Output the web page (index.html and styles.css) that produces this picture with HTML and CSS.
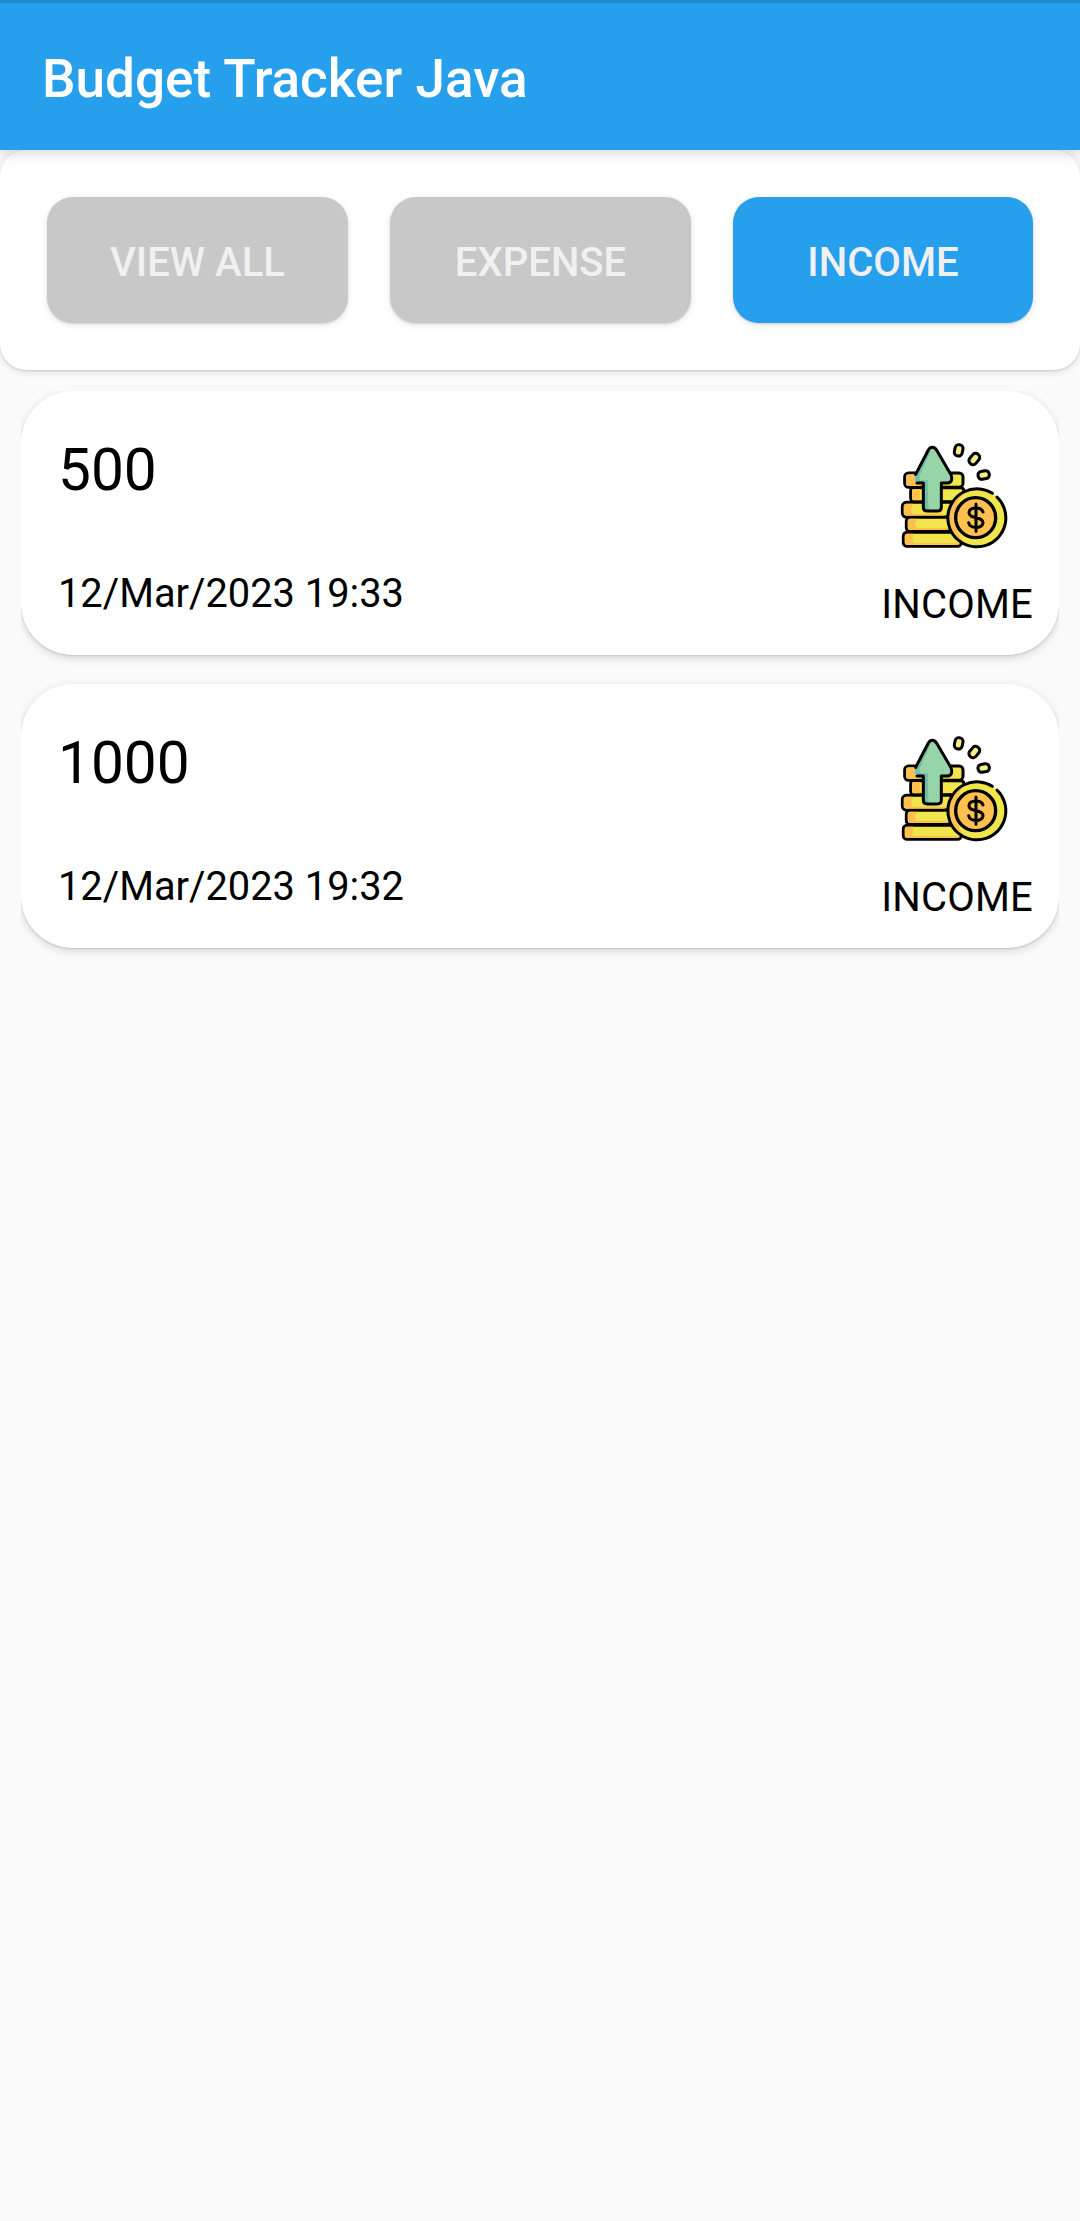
FILE: index.html
```html
<!DOCTYPE html>
<html lang="en">
<head>
<meta charset="utf-8">
<title>Budget Tracker Java</title>
<link rel="stylesheet" href="styles.css">
</head>
<body>
<svg class="sprite" width="0" height="0" aria-hidden="true">
  <symbol id="income-icon" viewBox="7 0 390 390">
    <g stroke="#000" stroke-width="9" stroke-linejoin="round" stroke-linecap="round">
      <rect x="45" y="129" width="175" height="43" rx="12" fill="#f0e54a"/>
      <rect x="63" y="173" width="160" height="42" rx="10" fill="#f0e54a"/>
      <rect x="38" y="217" width="180" height="44" rx="12" fill="#f0e54a"/>
      <rect x="50" y="262" width="170" height="42" rx="11" fill="#f0e54a"/>
      <rect x="41" y="307" width="174" height="42" rx="11" fill="#f0e54a"/>
    </g>
    <g fill="#ffc050">
      <path d="M57 133H92V168H57Q49 168 49 160V141Q49 133 57 133ZM70 177H91V211H70Q67 211 67 204V184Q67 177 70 177ZM51 221H70L64 239L70 257H51Q42 257 42 249V229Q42 221 51 221ZM62 266H82L76 283L82 300H62Q54 300 54 292V274Q54 266 62 266ZM53 311H72L68 328L72 345H53Q45 345 45 337V319Q45 311 53 311Z"/>
      <path d="M68 339H205V345H68ZM80 294H170V300H80ZM68 251H165V257H68Z"/>
    </g>
    <path d="M128 52Q121 52 116 60L78 133Q67 157 85 159H101V232Q101 243 113 243H143Q155 243 155 232V159H175Q193 155 184 134L142 62Q136 52 128 52Z" fill="#96d5a8"/>
    <path d="M118 61L80 134Q70 156 86 156H101V232Q103 240 113 240H119Q114 232 115 151H96Q85 149 92 132L122 66Z" fill="#72bfa5"/>
    <path d="M78 133L116 60Q121 52 128 52Q136 52 142 62L184 134Q192 159 170 159H155V232Q155 243 143 243H113Q101 243 101 232V159H82" fill="none" stroke="#000" stroke-width="9" stroke-linecap="round" stroke-linejoin="round"/>
    <circle cx="260" cy="263" r="87" fill="#f0e54a"/>
    <path d="M220 186C164 212 156 303 213 336L230 344C188 302 183 229 228 184Z" fill="#ffc050"/>
    <path d="M308 190A87 87 0 1 0 322 201" fill="none" stroke="#000" stroke-width="9" stroke-linecap="round"/>
    <circle cx="258" cy="263" r="60" fill="#ffc050" stroke="#000" stroke-width="10"/>
    <path d="M259 222V304M280 246C275 230 240 230 238 247C237 270 281 256 280 279C278 297 240 297 237 278" fill="none" stroke="#000" stroke-width="9" stroke-linecap="round"/>
    <g fill="#f6ee86" stroke="#000" stroke-width="9">
      <rect x="-12" y="-17" width="24" height="34" rx="11" transform="translate(207 61) rotate(12)"/>
      <rect x="-12" y="-18" width="24" height="36" rx="11" transform="translate(254 87) rotate(40)"/>
      <rect x="-12" y="-17" width="24" height="34" rx="11" transform="translate(282 135) rotate(80)"/>
    </g>
  </symbol>
</svg>

<header class="app-bar"><h1 class="app-title">Budget Tracker Java</h1></header>

<nav class="filters">
  <button class="filter">VIEW ALL</button>
  <button class="filter">EXPENSE</button>
  <button class="filter filter-active">INCOME</button>
</nav>

<main class="list">
  <article class="card">
    <div class="details">
      <div class="amount">500</div>
      <div class="date">12/Mar/2023 19:33</div>
    </div>
    <div class="type">
      <svg class="type-icon"><use href="#income-icon"/></svg>
      <span class="type-label">INCOME</span>
    </div>
  </article>
  <article class="card">
    <div class="details">
      <div class="amount">1000</div>
      <div class="date">12/Mar/2023 19:32</div>
    </div>
    <div class="type">
      <svg class="type-icon"><use href="#income-icon"/></svg>
      <span class="type-label">INCOME</span>
    </div>
  </article>
</main>
</body>
</html>
```

FILE: styles.css
```css
* {
  box-sizing: border-box;
}

body {
  margin: 0;
  min-height: 2221px;
  background: #fafafa;
  color: #000;
  font-family: Roboto, sans-serif;
  overflow-x: hidden;
}

.sprite {
  display: block;
}

.app-bar {
  position: relative;
  z-index: 1;
  display: flex;
  align-items: center;
  height: 150px;
  padding: 5px 42px 0;
  border-top: 3px solid #1f8ccf;
  background: #269fed;
  box-shadow: 0 3px 14px rgba(0, 0, 0, 0.16);
}

.app-title {
  margin: 0;
  color: #fff;
  font-size: 53.1px;
  font-weight: 500;
  line-height: 62px;
}

.filters {
  display: grid;
  grid-template-columns: 301fr 301fr 300fr;
  gap: 42px;
  height: 220px;
  padding: 47px;
  border-radius: 26px;
  background: #fff;
  box-shadow: 0 1px 2px rgba(0, 0, 0, 0.14), 0 2px 8px rgba(0, 0, 0, 0.1);
}

.filter {
  padding: 6px 0 0;
  border: 0;
  border-radius: 26px;
  background: #c8c8c8;
  color: #f0f0f0;
  font: 500 40.1px/46px Roboto, sans-serif;
  box-shadow: 0 1px 2px rgba(0, 0, 0, 0.12), 0 2px 7px rgba(0, 0, 0, 0.1);
}

.filter-active {
  background: #269fed;
}

.list {
  display: flex;
  flex-direction: column;
  gap: 29px;
  margin: 21px 21px 0;
  padding-bottom: 29px;
  overflow: hidden;
}

.card {
  display: flex;
  justify-content: space-between;
  height: 264px;
  padding: 39px 26px 0 37px;
  border-radius: 52px;
  background: #fff;
  box-shadow: 0 1px 2px rgba(0, 0, 0, 0.13), 0 3px 9px rgba(0, 0, 0, 0.14);
}

.details {
  display: flex;
  flex-direction: column;
  gap: 66px;
  padding-top: 5px;
}

.amount {
  font-size: 58.6px;
  line-height: 70px;
}

.date {
  font-size: 39.8px;
  line-height: 46px;
}

.type {
  display: flex;
  flex-direction: column;
  align-items: center;
  gap: 22px;
}

.type-icon {
  width: 130px;
  height: 130px;
}

.type-label {
  font-size: 40px;
  line-height: 46px;
  letter-spacing: 0.2px;
}
```
